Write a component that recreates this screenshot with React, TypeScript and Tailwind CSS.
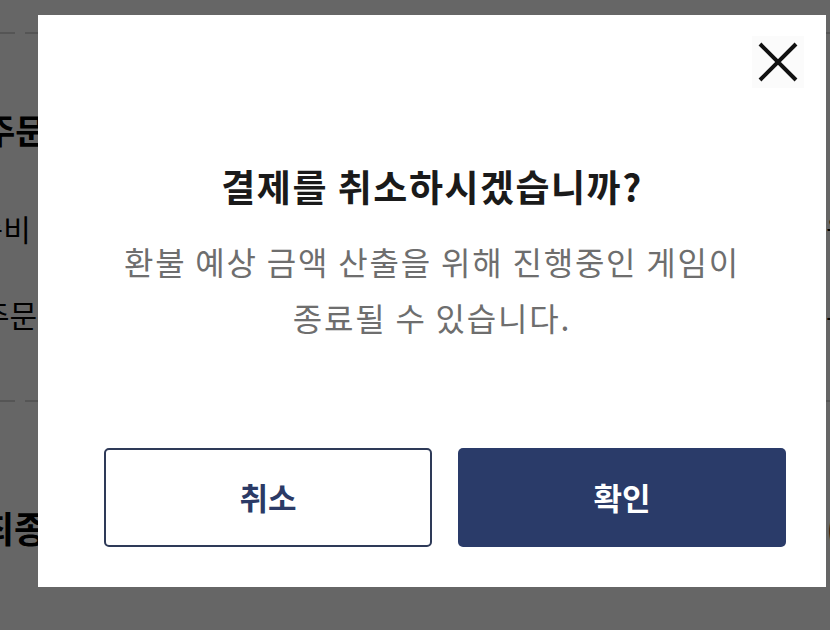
import React from 'react';

const font = { fontFamily: '"Noto Sans CJK KR", "Noto Sans", sans-serif' };

const Dashed = () => (
  <div className="h-[2px] w-full bg-[repeating-linear-gradient(90deg,#d4d4d4_0_15px,transparent_15px_25px)]" />
);

export default function App() {
  return (
    <div className="relative w-[830px] h-[630px] overflow-hidden bg-white" style={font}>
      {/* page behind the dialog */}
      <div className="flex flex-col text-black">
        <div className="h-[32px]" />
        <Dashed />
        <div className="h-[78px]" />
        <div className="flex items-center h-[36px]">
          <span className="-ml-[16px] text-[34px] font-bold leading-none">주문 금액</span>
        </div>
        <div className="h-[62px]" />
        <div className="flex items-center h-[36px]">
          <span className="-ml-[52px] text-[30px] leading-none">배송비</span>
          <span className="ml-auto -mr-[60px] w-[64px] text-[30px] leading-none">원</span>
        </div>
        <div className="h-[50px]" />
        <div className="flex items-center h-[36px]">
          <span className="-ml-[18px] text-[30px] leading-none">주문 할인</span>
          <span className="ml-auto -mr-[60px] w-[64px] text-[30px] leading-none">-</span>
        </div>
        <div className="h-[68px]" />
        <Dashed />
        <div className="h-[104px]" />
        <div className="flex items-center h-[42px]">
          <span className="-ml-[19px] text-[36px] font-bold leading-none">최종 결제</span>
          <span className="ml-auto -mr-[60px] w-[64px] text-[40px] font-bold leading-none">(</span>
        </div>
      </div>

      {/* dim overlay + dialog */}
      <div className="absolute inset-0 bg-black/60 flex items-start pt-[15px] pl-[38px]">
        <div className="relative w-[788px] h-[572px] bg-white flex flex-col items-center pt-[146px]">
          <button className="absolute left-[714px] top-[21px] w-[52px] h-[52px] bg-[#fbfbfb] flex items-center justify-center">
            <svg width="40" height="40" viewBox="0 0 40 40">
              <path d="M2 2 L38 38 M38 2 L2 38" stroke="#111" strokeWidth="4" fill="none" />
            </svg>
          </button>

          <h2 className="h-[50px] leading-[50px] text-[37px] font-bold text-[#1a1a1a] tracking-[1.5px]">
            결제를 취소하시겠습니까?
          </h2>
          <p className="mt-[22px] text-center text-[32px] leading-[56px] text-[#6e6e6e] tracking-[1.8px]">
            환불 예상 금액 산출을 위해 진행중인 게임이
            <br />
            종료될 수 있습니다.
          </p>

          <div className="mt-auto mb-[40px] self-stretch ml-[66px] mr-[40px] grid grid-cols-2 gap-[26px]">
            <button className="h-[99px] rounded-[5px] border-2 border-[#2e3a58] bg-white text-[#2b3a66] text-[31px] font-bold">
              취소
            </button>
            <button className="h-[99px] rounded-[5px] bg-[#2a3b69] text-white text-[31px] font-bold">
              확인
            </button>
          </div>
        </div>
      </div>
    </div>
  );
}
